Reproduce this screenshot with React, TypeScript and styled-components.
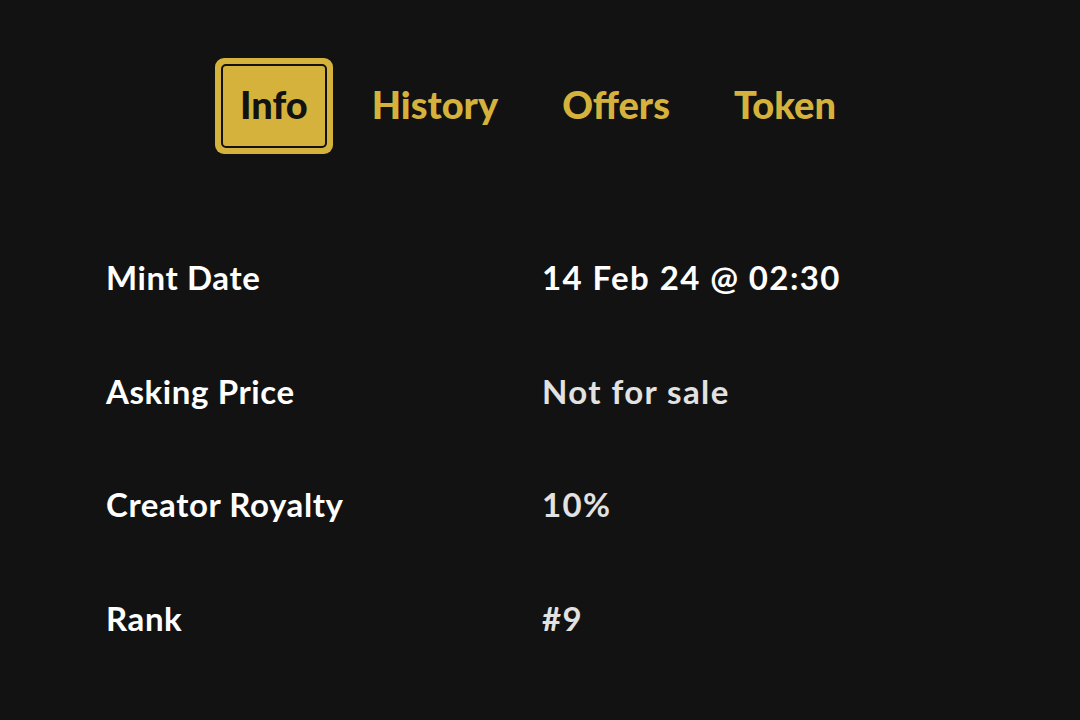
import React, { useState } from "react";
import styled, { createGlobalStyle } from "styled-components";

const GlobalStyle = createGlobalStyle`
  html, body {
    margin: 0;
    padding: 0;
    background: #121212;
  }
  body {
    font-family: Lato, "Noto Sans", sans-serif;
  }
`;

const Page = styled.div`
  width: 1080px;
  height: 720px;
  background: #121212;
  padding-top: 58px;
  box-sizing: border-box;
`;

const Tabs = styled.nav`
  display: flex;
  justify-content: center;
  gap: 14px;
  padding-right: 4px;
`;

const Tab = styled.button<{ $active?: boolean }>`
  position: relative;
  font-family: Lato, sans-serif;
  font-weight: 900;
  font-size: 38px;
  line-height: 1;
  height: 96px;
  padding: 0 25px 5px;
  box-sizing: border-box;
  border: none;
  border-radius: 9px;
  cursor: pointer;
  outline: none;
  color: ${(p) => (p.$active ? "#121212" : "#d5b23c")};
  background: ${(p) => (p.$active ? "#d5b23c" : "transparent")};

  &::before {
    content: "";
    display: ${(p) => (p.$active ? "block" : "none")};
    position: absolute;
    inset: 6px;
    border: 2.5px solid #121212;
    border-radius: 5px;
  }
`;

const Details = styled.dl`
  display: grid;
  grid-template-columns: 1fr 1fr;
  grid-auto-rows: 113.5px;
  margin: 107px 0 0;
  padding: 0 102px 0 106px;
  align-items: start;
`;

const Label = styled.dt`
  margin: 0;
  font-weight: 700;
  font-size: 33px;
  letter-spacing: 0.6px;
  color: #ffffff;
  line-height: 1;
`;

const Value = styled.dd<{ $bright?: boolean }>`
  margin: 0;
  font-weight: 700;
  font-size: 33px;
  letter-spacing: 1.4px;
  line-height: 1;
  color: ${(p) => (p.$bright ? "#ffffff" : "#e2e2e2")};
`;

const tabs = ["Info", "History", "Offers", "Token"];

const rows: { label: string; value: string; bright?: boolean }[] = [
  { label: "Mint Date", value: "14 Feb 24 @ 02:30", bright: true },
  { label: "Asking Price", value: "Not for sale" },
  { label: "Creator Royalty", value: "10%" },
  { label: "Rank", value: "#9" },
];

export default function App() {
  const [active, setActive] = useState("Info");
  return (
    <Page>
      <GlobalStyle />
      <Tabs>
        {tabs.map((t) => (
          <Tab key={t} $active={t === active} onClick={() => setActive(t)}>
            {t}
          </Tab>
        ))}
      </Tabs>
      <Details>
        {rows.map((r) => (
          <React.Fragment key={r.label}>
            <Label>{r.label}</Label>
            <Value $bright={r.bright}>{r.value}</Value>
          </React.Fragment>
        ))}
      </Details>
    </Page>
  );
}
